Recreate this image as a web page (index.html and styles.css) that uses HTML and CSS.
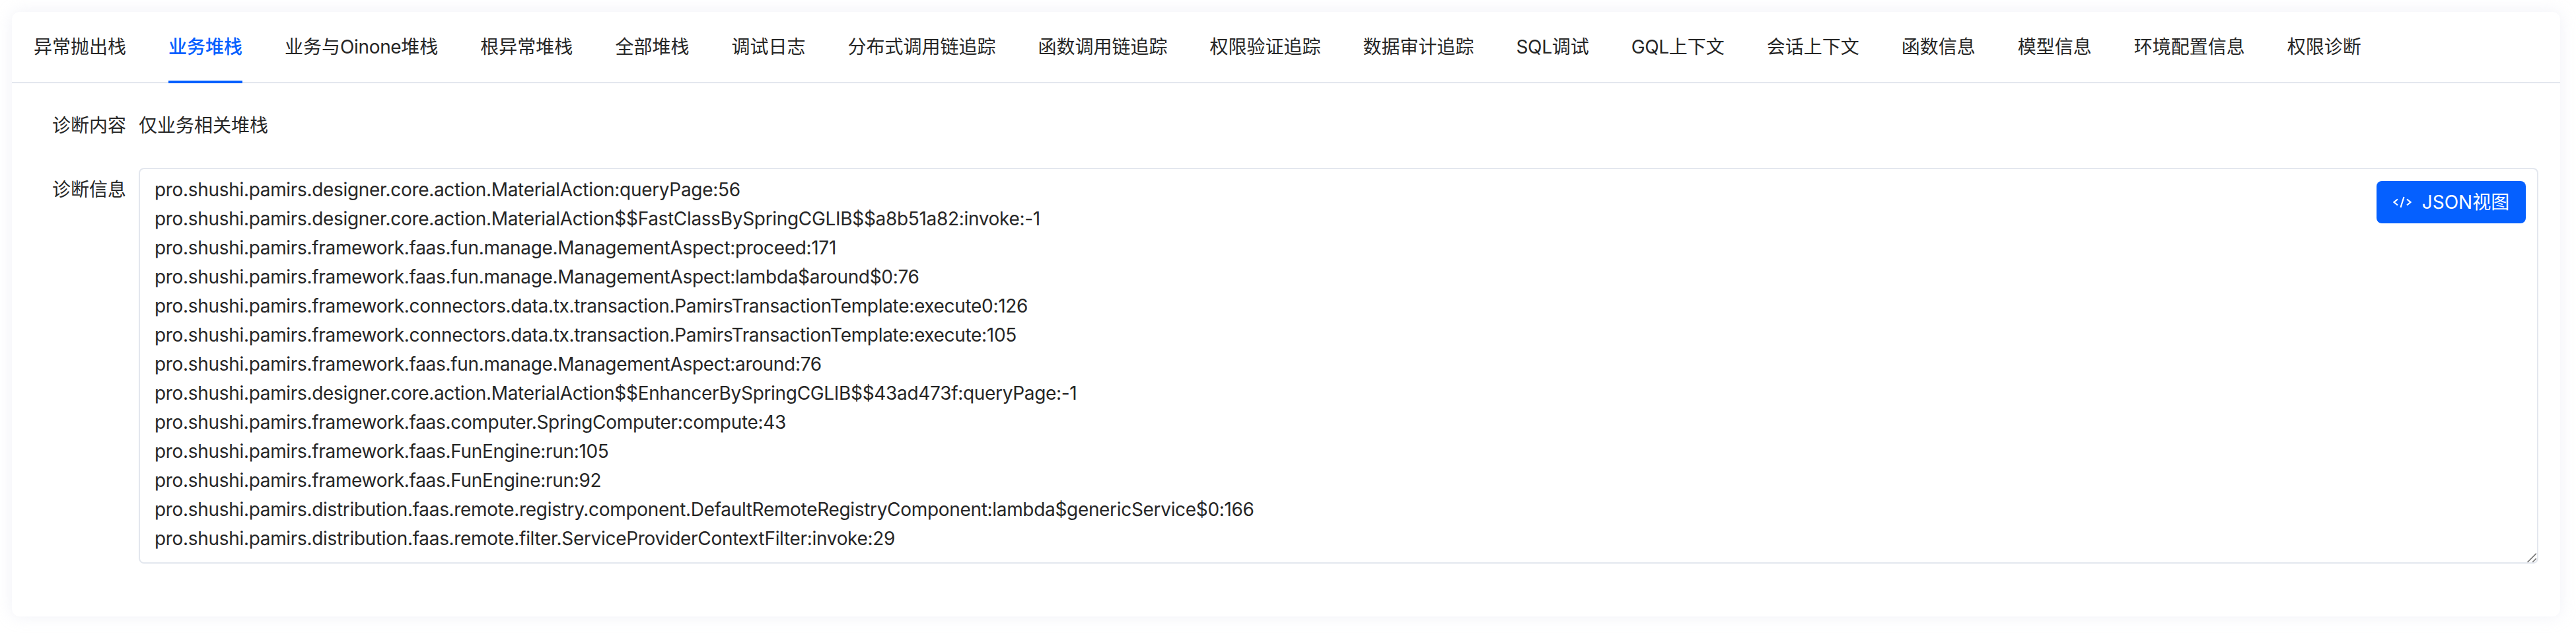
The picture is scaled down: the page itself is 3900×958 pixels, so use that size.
FILE: index.html
```html
<!DOCTYPE html>
<html lang="zh">
<head>
<meta charset="utf-8">
<title>诊断</title>
<link rel="stylesheet" href="styles.css">
</head>
<body>
<main class="card">
  <nav class="tabs">
    <a class="tab">异常抛出栈</a>
    <a class="tab active">业务堆栈</a>
    <a class="tab">业务与<span class="latin">Oinone</span>堆栈</a>
    <a class="tab">根异常堆栈</a>
    <a class="tab">全部堆栈</a>
    <a class="tab">调试日志</a>
    <a class="tab">分布式调用链追踪</a>
    <a class="tab">函数调用链追踪</a>
    <a class="tab">权限验证追踪</a>
    <a class="tab">数据审计追踪</a>
    <a class="tab"><span class="latin">SQL</span>调试</a>
    <a class="tab"><span class="latin">GQL</span>上下文</a>
    <a class="tab">会话上下文</a>
    <a class="tab">函数信息</a>
    <a class="tab">模型信息</a>
    <a class="tab">环境配置信息</a>
    <a class="tab">权限诊断</a>
  </nav>
  <section class="form">
    <div class="row row-content">
      <label class="label">诊断内容</label>
      <div class="value">仅业务相关堆栈</div>
    </div>
    <div class="row">
      <label class="label label-info">诊断信息</label>
      <div class="field">
        <textarea class="stack" readonly spellcheck="false">pro.shushi.pamirs.designer.core.action.MaterialAction:queryPage:56
pro.shushi.pamirs.designer.core.action.MaterialAction$$FastClassBySpringCGLIB$$a8b51a82:invoke:-1
pro.shushi.pamirs.framework.faas.fun.manage.ManagementAspect:proceed:171
pro.shushi.pamirs.framework.faas.fun.manage.ManagementAspect:lambda$around$0:76
pro.shushi.pamirs.framework.connectors.data.tx.transaction.PamirsTransactionTemplate:execute0:126
pro.shushi.pamirs.framework.connectors.data.tx.transaction.PamirsTransactionTemplate:execute:105
pro.shushi.pamirs.framework.faas.fun.manage.ManagementAspect:around:76
pro.shushi.pamirs.designer.core.action.MaterialAction$$EnhancerBySpringCGLIB$$43ad473f:queryPage:-1
pro.shushi.pamirs.framework.faas.computer.SpringComputer:compute:43
pro.shushi.pamirs.framework.faas.FunEngine:run:105
pro.shushi.pamirs.framework.faas.FunEngine:run:92
pro.shushi.pamirs.distribution.faas.remote.registry.component.DefaultRemoteRegistryComponent:lambda$genericService$0:166
pro.shushi.pamirs.distribution.faas.remote.filter.ServiceProviderContextFilter:invoke:29</textarea>
        <button class="json-btn" type="button">
          <svg class="json-icon" viewBox="0 0 28 28" fill="none" stroke="currentColor" stroke-width="2.2" aria-hidden="true">
            <path d="M7 9.5 1.5 14 7 18.5M21 9.5 26.5 14 21 18.5M16.5 6 11.5 22"/>
          </svg>
          <span>JSON视图</span>
        </button>
        <svg class="grip" viewBox="0 0 14 14" fill="none" stroke="#777" stroke-width="1.6" aria-hidden="true">
          <path d="M0.5 14 14 0.5M8 14 14 8"/>
        </svg>
      </div>
    </div>
  </section>
</main>
</body>
</html>
```
FILE: styles.css
```css
* { box-sizing: border-box; }
html, body { margin: 0; height: 100%; }
body {
  padding: 18px 24px 25px 18px;
  background: #fff;
  color: #262626;
  font-family: Inter, "Noto Sans CJK SC", sans-serif;
  font-size: 28px;
  line-height: 44px;
}
.card {
  height: 915px;
  background: #fff;
  border-radius: 12px;
  box-shadow: 0 0 24px rgba(200, 205, 225, .28);
}
.tabs {
  display: flex;
  height: 108px;
  padding-left: 1px;
  border-bottom: 2px solid #e3e7ee;
}
.tab {
  position: relative;
  margin: 0 32px;
  height: 108px;
  display: block;
  padding-top: 31px;
  white-space: nowrap;
}
.latin { letter-spacing: -.35px; }
.tab.active { color: #0560ff; font-weight: 500; }
.tab.active::after {
  content: "";
  position: absolute;
  left: 0;
  right: 0;
  bottom: 0;
  height: 4px;
  background: #0560ff;
}
.form { padding: 42px 33px 0 61px; }
.row { display: flex; gap: 20px; }
.row-content { margin-bottom: 42px; }
.label { width: 111px; flex: none; text-align: right; white-space: nowrap; }
.label-info { padding-top: 11px; }
.field { position: relative; flex: 1; display: flex; }
.stack {
  flex: 1;
  height: 599px;
  padding: 9px 22px;
  border: 2px solid #e3e7ee;
  border-radius: 8px;
  background: #fff;
  color: #262626;
  font: inherit;
  letter-spacing: -.32px;
  outline: none;
  white-space: pre;
  overflow: hidden;
  resize: none;
}
.json-btn {
  position: absolute;
  top: 20px;
  right: 19px;
  width: 226px;
  height: 64px;
  display: flex;
  align-items: center;
  justify-content: center;
  gap: 16px;
  border: 0;
  border-radius: 8px;
  background: #0560ff;
  color: #fff;
  font: inherit;
}
.json-icon { width: 28px; height: 28px; flex: none; }
.grip {
  position: absolute;
  right: 3px;
  bottom: 2px;
  width: 14px;
  height: 14px;
  pointer-events: none;
}
```
